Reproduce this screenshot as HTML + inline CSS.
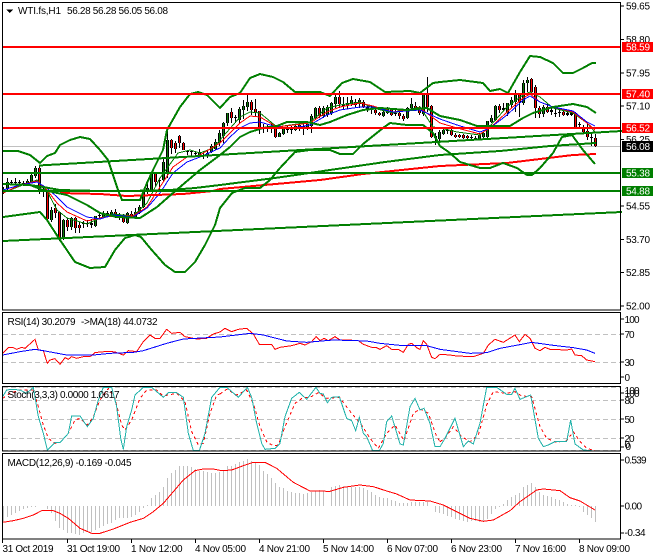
<!DOCTYPE html>
<html><head><meta charset="utf-8"><title>WTI.fs,H1</title>
<style>
html,body{margin:0;padding:0;background:#fff;width:660px;height:560px;overflow:hidden}
svg{display:block;shape-rendering:crispEdges}
text{font-family:"Liberation Sans",sans-serif;font-size:10px;fill:#000;shape-rendering:auto}
text.w{fill:#fff}
.b{fill:none;stroke:#007f00;stroke-width:2}
.h{fill:none;stroke-width:2}
.th{fill:none;stroke-width:3}
</style></head><body>
<svg width="660" height="560" viewBox="0 0 660 560" xmlns="http://www.w3.org/2000/svg">
<rect width="660" height="560" fill="#fff"/>

<!-- grey price line -->
<path d="M3 146.5H621" stroke="#c0c0c0" fill="none"/>

<!-- candles -->
<defs>
<path id="gb" d="M3.5 189V193M7.5 182V189M27.5 181V183M31.5 175V182M35.5 168V176M51.5 210V220M63.5 220V239M71.5 218V227M95.5 216V226M103.5 213V217M111.5 212V215M127.5 213V223M135.5 212V217M139.5 207V213M143.5 192V207M147.5 188V192M151.5 174V190M163.5 162V180M167.5 140V172M199.5 152V156M211.5 146V152M215.5 142V149M219.5 133V143M223.5 123V136M227.5 113V123M239.5 109V120M243.5 106V110M247.5 102V107M279.5 133V137M283.5 129V134M295.5 126V130M299.5 125V128M307.5 124V128M311.5 116V126M315.5 108V118M323.5 108V116M327.5 107V115M331.5 103V113M335.5 97V104M347.5 103V105M351.5 100V104M359.5 100V104M383.5 112V116M387.5 108V113M407.5 108V118M411.5 104V108M423.5 95V114M439.5 132V139M443.5 130V134M479.5 135V139M483.5 133V137M487.5 121V137M491.5 118V122M495.5 106V120M507.5 103V113M511.5 100V105M515.5 94V102M523.5 83V103M527.5 80V83M543.5 107V114"/>
<path id="rb" d="M39.5 168V191M43.5 190V192M47.5 191V219M55.5 208V213M59.5 212V238M67.5 220V227M75.5 218V228M79.5 225V228M115.5 212V216M123.5 215V222M131.5 214V216M155.5 174V182M171.5 140V148M175.5 143V149M179.5 136V143M183.5 143V150M207.5 153V155M231.5 112V118M251.5 102V110M255.5 109V112M259.5 111V129M275.5 127V137M319.5 108V116M339.5 97V104M355.5 102V105M363.5 102V107M375.5 110V113M379.5 113V115M391.5 110V115M399.5 113V116M403.5 116V119M415.5 106V110M419.5 110V113M427.5 94V107M431.5 106V137M451.5 130V135M455.5 135V137M459.5 135V137M463.5 135V138M467.5 136V138M499.5 106V110M519.5 94V102M531.5 79V92M535.5 87V108M539.5 108V114M547.5 107V112M563.5 112V115M575.5 113V127M583.5 127V132M587.5 131V137M595.5 138V146"/>
</defs>
<path fill="none" stroke="#000" d="M3.5 187V194M7.5 178V191M11.5 180V185M15.5 178V184M19.5 180V185M23.5 181V186M27.5 179V185M31.5 174V183M35.5 166V178M39.5 165V194M43.5 188V197M47.5 190V220M51.5 207V222M55.5 204V218M59.5 212V241M63.5 219V240M67.5 218V231M71.5 217V230M75.5 217V233M79.5 222V233M83.5 221V228M87.5 220V227M91.5 219V228M95.5 216V227M99.5 212V218M103.5 211V218M107.5 211V217M111.5 210V216M115.5 209V218M119.5 213V220M123.5 214V223M127.5 212V224M131.5 211V218M135.5 208V218M139.5 205V214M143.5 190V208M147.5 183V194M151.5 173V192M155.5 173V186M159.5 178V190M163.5 158V182M167.5 130V178M171.5 139V154M175.5 141V153M179.5 135V148M183.5 142V150M187.5 150V155M191.5 150V156M195.5 151V157M199.5 149V157M203.5 152V159M207.5 151V158M211.5 144V153M215.5 139V150M219.5 130V146M223.5 122V143M227.5 113V126M231.5 108V123M235.5 115V123M239.5 107V123M243.5 100V119M247.5 94V111M251.5 100V115M255.5 99V117M259.5 111V134M263.5 124V133M267.5 125V132M271.5 124V133M275.5 125V138M279.5 132V137M283.5 128V135M287.5 126V133M291.5 126V134M295.5 125V131M299.5 122V131M303.5 122V135M307.5 122V130M311.5 114V133M315.5 107V119M319.5 106V118M323.5 106V118M327.5 105V117M331.5 102V115M335.5 94V108M339.5 91V108M343.5 97V109M347.5 97V109M351.5 96V106M355.5 99V107M359.5 98V108M363.5 100V108M367.5 105V112M371.5 106V114M375.5 107V115M379.5 112V116M383.5 110V117M387.5 107V114M391.5 108V116M395.5 110V116M399.5 111V119M403.5 114V121M407.5 107V119M411.5 98V111M415.5 102V111M419.5 106V115M423.5 94V116M427.5 77V112M431.5 105V138M435.5 133V145M439.5 130V141M443.5 128V135M447.5 128V134M451.5 128V136M455.5 133V138M459.5 134V138M463.5 134V139M467.5 135V139M471.5 135V140M475.5 136V140M479.5 133V140M483.5 132V138M487.5 121V138M491.5 115V123M495.5 105V121M499.5 104V113M503.5 103V111M507.5 103V116M511.5 97V108M515.5 90V112M519.5 93V117M523.5 80V105M527.5 77V92M531.5 78V93M535.5 85V118M539.5 106V118M543.5 105V117M547.5 104V113M551.5 108V115M555.5 109V117M559.5 109V117M563.5 110V116M567.5 110V116M571.5 110V116M575.5 112V128M579.5 122V127M583.5 125V133M587.5 122V140M591.5 133V146M595.5 134V147"/>
<g fill="none" stroke="#000" stroke-width="3">
<use href="#gb"/><use href="#rb"/>
<path d="M11.5 182V183M15.5 182V183M19.5 182V183M23.5 183V184M83.5 223V224M87.5 223V224M91.5 223V225M99.5 215V216M107.5 213V214M119.5 216V217M159.5 180V181M187.5 151V152M191.5 151V152M195.5 153V154M203.5 155V156M235.5 117V118M263.5 128V129M267.5 128V129M271.5 128V129M287.5 129V130M291.5 129V130M303.5 126V127M343.5 105V106M367.5 107V109M371.5 109V110M395.5 113V114M435.5 136V138M447.5 130V131M471.5 137V138M475.5 138V139M503.5 108V110M551.5 110V112M555.5 113V114M559.5 112V113M567.5 113V115M571.5 113V115M579.5 124V125M591.5 137V138"/>
</g>
<use href="#gb" fill="none" stroke="#0b7d0b"/>
<use href="#rb" fill="none" stroke="#f00"/>

<!-- thin moving averages -->
<polyline fill="none" stroke="#007f00" points="3,193 20,186 37,180 47,191 57,210 67,218 87,224 100,218 113,214 133,216 147,203 160,178 173,160 178,153 190,150 200,153 213,148 220,140 240,117 250,112 260,113 277,127 310,122 327,108 340,105 360,102 373,108 393,113 420,107 433,127 440,128 457,132 480,135 490,126 507,107 523,95 530,92 540,97 553,108 573,113 587,123 595,132"/>
<polyline fill="none" stroke="#f00" points="3,193 20,185 37,181 47,190 57,203 67,212 87,221 100,218 113,216 133,216 147,207 160,187 173,167 187,157 200,155 220,143 240,123 250,116 260,117 277,127 310,123 327,112 340,107 360,103 373,106 393,112 420,108 440,123 457,128 480,134 490,128 507,112 523,98 530,94 540,102 553,107 573,112 587,123 595,130"/>
<polyline fill="none" stroke="#00f" points="3,190 20,185 37,182 47,188 57,197 67,207 87,217 100,219 113,215 133,217 147,208 160,193 173,173 187,162 200,157 220,148 230,137 240,128 250,123 260,122 277,127 293,128 310,125 327,115 340,110 360,107 373,107 393,112 420,110 440,119 457,125 480,132 490,128 507,115 523,100 530,96 540,102 553,107 573,111 587,122 595,126"/>

<!-- long MA red and green -->
<polyline class="b" points="3,184 30,185 43,187 60,190 100,191 130,191 170,190 195,188 220,185 275,178 330,170 385,162 440,155 500,151 550,146 596,143"/>
<polyline class="h" stroke="#f00" points="60,193 100,194 127,196 183,194 213,191 220,189 320,180 363,174 440,166 507,163 573,155 596,154"/>

<!-- trend lines -->
<polyline class="b" points="39,165.5 622,131"/>
<polyline class="b" points="3,241 622,212"/>

<!-- bollinger -->
<polyline class="b" points="3,151 18,151 30,155 40,163 47,156 55,153 60,145 70,140 80,137 90,139 100,150 108,160 113,175 118,190 122,200 140,200 147,183 153,170 163,150 167,130 180,107 190,94 198,92 207,95 220,108 230,97 240,93 250,78 260,74 273,77 283,82 295,92 320,92 330,96 342,83 353,79 370,82 385,92 410,91 420,93 433,83 440,82 460,80 483,83 490,91 500,89 508,93 520,72 530,56 540,57 553,63 563,73 573,73 583,68 592,63 596,63"/>
<polyline class="b" points="3,184 30,185 43,190 67,195 87,205 100,213 117,217 140,218 157,207 173,193 200,170 220,155 230,147 240,137 250,132 263,128 277,126 287,122 307,122 320,125 330,122 347,115 363,110 380,108 407,110 427,108 440,116 460,120 477,126 487,126 510,126 523,118 533,113 553,107 573,104 587,107 596,113"/>
<polyline class="b" points="3,217 40,212 47,220 60,240 75,262 90,268 105,267 115,250 125,238 135,235 141,237 150,248 165,265 175,272 185,272 195,262 205,245 215,225 220,208 232,193 245,188 260,188 270,180 280,168 295,152 310,150 330,150 340,154 353,154 363,144 383,128 390,123 407,125 423,125 433,133 440,146 450,153 460,162 480,168 490,168 503,163 517,168 527,175 532,175 540,168 553,153 562,137 572,135 583,150 595,164"/>

<!-- horizontal levels -->
<path class="h" stroke="#f00" d="M3 47H621M3 94H621M3 128H621"/>
<path class="h" stroke="#007f00" d="M3 173H621M3 191H621"/>

<!-- RSI levels -->
<path fill="none" stroke="#c0c0c0" stroke-dasharray="5 3" d="M3 334.5H620M3 362.5H620M3 387.5H620M3 400.5H620M3 419.5H620M3 438.5H620M3 450.5H620"/>

<!-- RSI lines -->
<g transform="translate(0 310) scale(.33333)">
<polyline class="th" stroke="#f00" points="8,130 25,113 40,113 50,118 65,112 75,115 105,88 115,120 130,122 142,160 150,150 165,146 180,163 195,143 205,148 215,140 230,145 250,140 270,140 285,128 300,126 330,124 345,126 370,135 385,122 410,125 430,95 450,75 465,85 480,85 500,58 515,70 540,67 555,80 590,87 620,85 640,72 660,66"/>
<polyline class="th" stroke="#00f" points="8,135 60,125 105,118 130,122 200,135 280,135 330,130 400,127 430,122 500,100 550,87 660,81"/>
</g>
<g transform="translate(220 310) scale(.33333)">
<polyline class="th" stroke="#f00" points="0,66 15,55 35,65 55,58 80,55 100,72 118,103 155,103 165,118 180,112 215,107 240,100 255,105 275,95 288,80 300,92 312,85 325,92 345,80 360,90 385,90 415,92 430,103 455,112 470,113 480,118 500,107 515,118 535,118 550,127 565,103 575,100 590,113 600,118 610,92 620,103 635,142 645,146 660,133"/>
<polyline class="th" stroke="#00f" points="0,81 90,70 130,75 200,93 260,97 340,90 440,93 480,100 550,107 620,107 660,118"/>
</g>
<g transform="translate(440 310) scale(.33333)">
<polyline class="th" stroke="#f00" points="0,133 30,135 50,138 100,140 130,130 145,105 165,88 190,97 225,75 238,95 255,73 270,85 285,115 300,122 315,112 330,118 380,120 395,117 405,135 425,137 440,150 465,155"/>
<polyline class="th" stroke="#00f" points="0,118 90,130 140,128 180,115 250,102 275,97 340,106 400,113 440,120 465,130"/>
</g>

<!-- Stochastic -->
<g transform="translate(0 310) scale(.33333)">
<polyline class="th" stroke="#f00" stroke-dasharray="9 9" points="8,265 30,250 60,240 100,240 115,290 130,345 145,385 165,400 180,398 205,370 225,330 240,325 262,345 280,320 300,270 325,235 345,265 365,345 375,360 395,330 420,265 440,240 470,240 490,258 530,250 555,275 575,365 595,405 610,400 630,310 650,255 660,252"/>
<polyline class="th" stroke="#20b2aa" points="8,260 20,240 35,238 60,240 80,250 100,232 115,320 130,370 142,420 165,398 180,398 205,370 215,318 240,318 262,350 280,325 295,270 310,232 335,232 350,290 362,385 370,418 380,350 395,300 405,255 430,232 455,232 490,262 505,248 530,248 550,262 565,370 580,422 598,422 615,370 635,262 660,232"/>
</g>
<g transform="translate(220 310) scale(.33333)">
<polyline class="th" stroke="#f00" stroke-dasharray="9 9" points="0,252 20,238 50,255 80,240 100,280 120,350 140,395 160,408 175,405 195,350 225,280 250,262 270,262 295,248 320,265 358,262 395,310 425,345 450,385 475,415 500,370 525,345 552,392 580,310 600,297 625,310 650,380 660,395"/>
<polyline class="th" stroke="#20b2aa" points="0,232 20,232 55,262 82,232 95,262 110,340 125,400 135,418 165,415 180,400 195,320 215,265 238,247 260,268 288,232 300,250 310,252 322,278 335,262 358,260 380,325 395,332 407,362 418,322 430,370 440,380 458,422 478,422 490,400 500,335 515,318 540,402 550,405 570,290 585,265 600,300 612,295 630,340 645,410 660,410"/>
</g>
<g transform="translate(440 310) scale(.33333)">
<polyline class="th" stroke="#f00" stroke-dasharray="9 9" points="0,395 15,385 40,350 65,380 90,395 115,375 140,285 160,245 200,250 225,245 245,258 275,260 300,350 320,385 350,397 380,392 400,365 420,395 440,415 465,422"/>
<polyline class="th" stroke="#20b2aa" points="0,410 15,385 45,325 70,410 85,393 100,402 120,340 140,232 170,232 200,253 215,253 225,235 240,268 272,255 295,385 310,410 325,405 345,395 380,395 392,330 405,402 430,420 455,422"/>
</g>

<!-- MACD histogram -->
<g fill="none" stroke="#c0c0c0">
<path d="M3.5 506V521M7.5 506V517M11.5 506V515M15.5 506V513M19.5 506V511M23.5 506V509M27.5 506V508M31.5 506V507M35.5 506V507M47.5 506V509M51.5 506V513M55.5 506V521M59.5 506V528M63.5 506V530M67.5 506V533M71.5 506V533M75.5 506V534M79.5 506V535M83.5 506V533M87.5 506V532M91.5 506V532M95.5 506V530M99.5 506V528M103.5 506V526M107.5 506V524M111.5 506V523M115.5 506V520M119.5 506V518M123.5 506V518M127.5 506V518M131.5 506V517M135.5 506V515M139.5 506V512M143.5 506V508M147.5 506V505M151.5 506V498M155.5 506V495M159.5 506V492M163.5 506V487M167.5 506V478M171.5 506V473M175.5 506V470M179.5 506V466M183.5 506V466M187.5 506V466M191.5 506V467M195.5 506V469M199.5 506V471M203.5 506V471M207.5 506V472M211.5 506V473M215.5 506V473M219.5 506V472M223.5 506V471M227.5 506V466M231.5 506V466M235.5 506V464M239.5 506V462M243.5 506V461M247.5 506V459M251.5 506V461M255.5 506V463M259.5 506V465M263.5 506V471M267.5 506V474M271.5 506V478M275.5 506V483M279.5 506V487M283.5 506V488M287.5 506V491M291.5 506V492M295.5 506V493M299.5 506V493M303.5 506V494M307.5 506V493M311.5 506V492M315.5 506V491M319.5 506V490M323.5 506V491"/>
<path d="M331.5 506V487M335.5 506V486M339.5 506V485M343.5 506V486M347.5 506V487M351.5 506V487M355.5 506V487M359.5 506V487M363.5 506V488M367.5 506V490M371.5 506V492M375.5 506V495M379.5 506V497M383.5 506V498M387.5 506V498M391.5 506V500M395.5 506V501M399.5 506V503M403.5 506V503M407.5 506V503M411.5 506V502M415.5 506V502M419.5 506V502M423.5 506V502M427.5 506V502M431.5 506V506M435.5 506V512M439.5 506V513M443.5 506V514M447.5 506V516M451.5 506V517M455.5 506V519M459.5 506V520M463.5 506V521M467.5 506V522M471.5 506V521M475.5 506V521M479.5 506V522M483.5 506V521M487.5 506V519M491.5 506V514M495.5 506V509M499.5 506V507M503.5 506V504M507.5 506V500M511.5 506V497M515.5 506V495M519.5 506V493M523.5 506V487M527.5 506V485M531.5 506V483M535.5 506V487M539.5 506V492M543.5 506V495M547.5 506V496M551.5 506V497M555.5 506V499M559.5 506V500M563.5 506V502M567.5 506V504M571.5 506V505M575.5 506V505M579.5 506V507M583.5 506V512M587.5 506V515M591.5 506V518M595.5 506V522"/>
</g>
<polyline class="th" transform="translate(0 450) scale(.33333)" stroke="#f00" stroke-width="3" points="8,217 40,212 70,205 100,195 125,182 160,182 180,190 205,205 240,235 275,250 300,250 340,237 390,217 430,205 460,185 490,160 520,125 550,90 585,62 610,57 640,57 665,62 695,60 730,47 760,37 795,37 830,55 880,97 930,123 990,124"/>
<polyline class="th" transform="translate(330 450) scale(.33333)" stroke="#f00" stroke-width="3" points="0,124 40,112 90,105 130,110 170,123 200,132 240,150 300,153 340,165 380,185 420,205 460,214 490,210 540,182 570,155 620,120 640,117 690,122 720,143 750,153 795,180"/>

<!-- frames -->
<g fill="none" stroke="#000">
<rect x="2.5" y="2.5" width="618" height="307.5"/>
<rect x="2.5" y="312.5" width="618" height="71"/>
<rect x="2.5" y="386.5" width="618" height="64.5"/>
<rect x="2.5" y="453.5" width="618" height="85.5"/>
<path d="M621 6H624M621 39.5H624M621 73H624M621 106H624M621 139.5H624M621 206H624M621 239.5H624M621 272.5H624M621 306H624M621 319H624M621 334H624M621 362H624M621 377H624M621 393H624M621 400H624M621 419H624M621 438H624M621 447H624M621 460H624M621 506H624M621 533H624"/>
<path d="M2.5 539V543M67.5 539V543M131.5 539V543M195.5 539V543M259.5 539V543M323.5 539V543M387.5 539V543M451.5 539V543M515.5 539V543M579.5 539V543"/>
</g>

<!-- title -->
<path d="M6 9.5H13L9.5 13Z" fill="#000" stroke="none"/>
<text x="18" y="14" textLength="43">WTI.fs,H1</text>
<text x="67" y="14" textLength="101">56.28 56.28 56.05 56.08</text>
<text x="7.5" y="325" textLength="68">RSI(14) 30.2079</text>
<text x="81" y="325" textLength="76.5">-&gt;MA(18) 44.0732</text>
<text x="7.5" y="398" textLength="112">Stoch(3,3,3) 0.0000 1.0617</text>
<text x="7.5" y="466" textLength="124">MACD(12,26,9) -0.169 -0.045</text>

<!-- right axis labels -->
<g>
<text x="626" y="9.5" textLength="24">59.65</text>
<text x="626" y="43" textLength="24">58.80</text>
<text x="626" y="76.5" textLength="24">57.95</text>
<text x="626" y="109.5" textLength="24">57.10</text>
<text x="626" y="143" textLength="24">56.25</text>
<text x="626" y="209.5" textLength="24">54.55</text>
<text x="626" y="243" textLength="24">53.70</text>
<text x="626" y="276" textLength="24">52.85</text>
<text x="626" y="309.5" textLength="24">52.00</text>
<text x="624.5" y="323" textLength="15">100</text>
<text x="624.5" y="338" textLength="10">70</text>
<text x="624.5" y="366" textLength="10">30</text>
<text x="624.5" y="381" textLength="5">0</text>
<text x="624.5" y="394" textLength="15">100</text>
<text x="624.5" y="397" textLength="15">100</text>
<text x="624.5" y="404" textLength="10">80</text>
<text x="624.5" y="423" textLength="10">50</text>
<text x="624.5" y="442" textLength="10">20</text>
<text x="624.5" y="448" textLength="5">0</text>
<text x="625.5" y="450" textLength="5">0</text>
<text x="624.5" y="463.5" textLength="22">0.539</text>
<text x="624.5" y="509.5" textLength="17.5">0.00</text>
<text x="624.5" y="536" textLength="21">-0.34</text>
</g>

<!-- price boxes -->
<rect x="622" y="42" width="31" height="10" fill="#f00"/><text class="w" x="626" y="50.5" textLength="24">58.59</text>
<rect x="622" y="89" width="31" height="10" fill="#f00"/><text class="w" x="626" y="97.5" textLength="24">57.40</text>
<rect x="622" y="123" width="31" height="10" fill="#f00"/><text class="w" x="626" y="131.5" textLength="24">56.52</text>
<rect x="622" y="141" width="31" height="11" fill="#000"/><text class="w" x="626" y="150" textLength="24">56.08</text>
<rect x="622" y="168" width="31" height="10" fill="#007f00"/><text class="w" x="626" y="176.5" textLength="24">55.38</text>
<rect x="622" y="186" width="31" height="10" fill="#007f00"/><text class="w" x="626" y="194.5" textLength="24">54.88</text>

<!-- time axis -->
<text x="2.5" y="552" textLength="51">31 Oct 2019</text>
<text x="67" y="552" textLength="53">31 Oct 19:00</text>
<text x="131" y="552" textLength="51.5">1 Nov 12:00</text>
<text x="195" y="552" textLength="51">4 Nov 05:00</text>
<text x="259" y="552" textLength="51">4 Nov 21:00</text>
<text x="323" y="552" textLength="51">5 Nov 14:00</text>
<text x="387" y="552" textLength="51">6 Nov 07:00</text>
<text x="451" y="552" textLength="51">6 Nov 23:00</text>
<text x="515" y="552" textLength="51">7 Nov 16:00</text>
<text x="579" y="552" textLength="51">8 Nov 09:00</text>
</svg>
</body></html>
